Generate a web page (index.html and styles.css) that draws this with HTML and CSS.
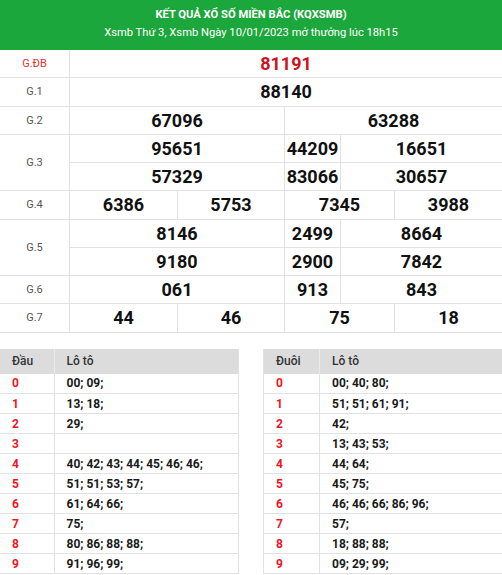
FILE: index.html
```html
<!DOCTYPE html>
<html lang="vi">
<head>
<meta charset="utf-8">
<title>KQXSMB</title>
<link rel="stylesheet" href="styles.css">
</head>
<body>
<header class="hdr">
  <div class="title">KẾT QUẢ XỔ SỐ MIỀN BẮC (KQXSMB)</div>
  <div class="sub">Xsmb Thứ 3, Xsmb Ngày 10/01/2023 mở thưởng lúc 18h15</div>
</header>

<div class="results">
  <div class="lbl red">G.ĐB</div>
  <div class="num all db">81191</div>

  <div class="lbl">G.1</div>
  <div class="num all">88140</div>

  <div class="lbl">G.2</div>
  <div class="num c12">67096</div>
  <div class="num c345">63288</div>

  <div class="lbl r2">G.3</div>
  <div class="num c12">95651</div>
  <div class="num c3">44209</div>
  <div class="num c45">16651</div>
  <div class="num c12">57329</div>
  <div class="num c3">83066</div>
  <div class="num c45">30657</div>

  <div class="lbl">G.4</div>
  <div class="num c1">6386</div>
  <div class="num c2">5753</div>
  <div class="num c34">7345</div>
  <div class="num c5">3988</div>

  <div class="lbl r2">G.5</div>
  <div class="num c12">8146</div>
  <div class="num c3">2499</div>
  <div class="num c45">8664</div>
  <div class="num c12">9180</div>
  <div class="num c3">2900</div>
  <div class="num c45">7842</div>

  <div class="lbl">G.6</div>
  <div class="num c12">061</div>
  <div class="num c3">913</div>
  <div class="num c45">843</div>

  <div class="lbl">G.7</div>
  <div class="num c1">44</div>
  <div class="num c2">46</div>
  <div class="num c34">75</div>
  <div class="num c5">18</div>
</div>

<div class="loto">
  <table class="lt lt-left">
    <thead><tr><th class="k">Đầu</th><th>Lô tô</th></tr></thead>
    <tbody>
      <tr><td class="k">0</td><td>00; 09;</td></tr>
      <tr><td class="k">1</td><td>13; 18;</td></tr>
      <tr><td class="k">2</td><td>29;</td></tr>
      <tr><td class="k">3</td><td></td></tr>
      <tr><td class="k">4</td><td>40; 42; 43; 44; 45; 46; 46;</td></tr>
      <tr><td class="k">5</td><td>51; 51; 53; 57;</td></tr>
      <tr><td class="k">6</td><td>61; 64; 66;</td></tr>
      <tr><td class="k">7</td><td>75;</td></tr>
      <tr><td class="k">8</td><td>80; 86; 88; 88;</td></tr>
      <tr><td class="k">9</td><td>91; 96; 99;</td></tr>
    </tbody>
  </table>
  <table class="lt lt-right">
    <thead><tr><th class="k">Đuôi</th><th>Lô tô</th></tr></thead>
    <tbody>
      <tr><td class="k">0</td><td>00; 40; 80;</td></tr>
      <tr><td class="k">1</td><td>51; 51; 61; 91;</td></tr>
      <tr><td class="k">2</td><td>42;</td></tr>
      <tr><td class="k">3</td><td>13; 43; 53;</td></tr>
      <tr><td class="k">4</td><td>44; 64;</td></tr>
      <tr><td class="k">5</td><td>45; 75;</td></tr>
      <tr><td class="k">6</td><td>46; 46; 66; 86; 96;</td></tr>
      <tr><td class="k">7</td><td>57;</td></tr>
      <tr><td class="k">8</td><td>18; 88; 88;</td></tr>
      <tr><td class="k">9</td><td>09; 29; 99;</td></tr>
    </tbody>
  </table>
</div>
</body>
</html>
```

FILE: styles.css
```css
* { box-sizing: border-box; }
html, body { margin: 0; padding: 0; background: #fff; }
body {
  font-family: Roboto, "Noto Sans", "Liberation Sans", sans-serif;
  color: #111;
  width: 502px;
  overflow: hidden;
}

.hdr {
  background: #1ca73c;
  color: #fff;
  height: 50px;
  display: flex;
  flex-direction: column;
  align-items: center;
  padding-top: 8px;
}
.hdr .title {
  font-size: 11.2px;
  font-weight: 700;
  line-height: 14px;
}
.hdr .sub {
  font-size: 11.2px;
  line-height: 14px;
  margin-top: 4px;
}

.results {
  display: grid;
  grid-template-columns: 69px 107px 106px 55px 53px 107px;
  grid-auto-rows: 27.25px;
  gap: 1px;
  background: #e2e2e2;
  border-bottom: 1px solid #e2e2e2;
}
.results > div {
  background: #fff;
  display: flex;
  align-items: center;
  justify-content: center;
}
.lbl {
  grid-column: 1 / 2;
  font-size: 11px;
  color: #555;
}
.lbl.red { color: #e5322d; }
.lbl.r2 { grid-row: span 2; }
.num {
  font-size: 18px;
  font-weight: 700;
  color: #111;
}
.num.db { color: #d0111b; }
.all { grid-column: 2 / 7; }
.c12 { grid-column: 2 / 4; }
.c345 { grid-column: 4 / 7; }
.c3 { grid-column: 4 / 5; }
.c45 { grid-column: 5 / 7; }
.c1 { grid-column: 2 / 3; }
.c2 { grid-column: 3 / 4; }
.c34 { grid-column: 4 / 6; }
.c5 { grid-column: 6 / 7; }

.loto {
  display: flex;
  gap: 24px;
  margin-top: 16px;
}
.lt {
  flex: 0 0 239px;
  width: 239px;
  border-collapse: collapse;
  table-layout: fixed;
  font-size: 12px;
}
.lt th {
  background: #dcdcdc;
  height: 25px;
  font-weight: 500;
  color: #333;
  text-align: left;
  padding: 0 12px;
  border-left: 1px solid #e9e9e9;
}
.lt th:first-child { border-left: none; }
.lt td {
  height: 20px;
  padding: 0 12px;
  font-weight: 700;
  color: #1a1a1a;
  border-bottom: 1px solid #e2e2e2;
  border-left: 1px solid #e2e2e2;
  line-height: 18px;
}
.lt td.k {
  color: #f0141e;
  border-left: none;
}
.lt-left { border-right: 1px solid #e2e2e2; }
.lt-left .k { width: 54px; }
.lt-right { border-left: 1px solid #e2e2e2; }
.lt-right .k { width: 56px; }
```
